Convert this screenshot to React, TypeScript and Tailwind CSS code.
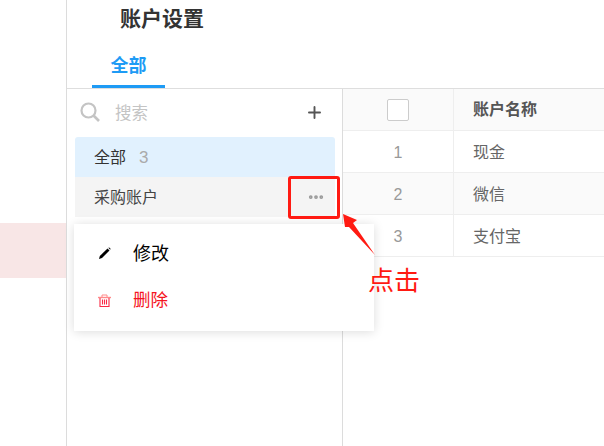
import { Plus, Ellipsis } from 'lucide-react';

const font = { fontFamily: '"Noto Sans CJK SC", "Liberation Sans", sans-serif' };

const rows = [
  { id: 1, name: '现金', stripe: false },
  { id: 2, name: '微信', stripe: true },
  { id: 3, name: '支付宝', stripe: false },
];

export default function App() {
  return (
    <div className="relative flex h-[446px] w-[604px] overflow-hidden bg-white font-['Liberation_Sans','Noto_Sans_CJK_SC',sans-serif]">
      {/* left nav strip */}
      <div className="flex w-[67px] shrink-0 flex-col border-r border-[#dcdcdc] pt-[223px]">
        <div className="h-[55px] bg-[#f8e6e6]"></div>
      </div>

      <div className="flex min-w-0 flex-1 flex-col">
        {/* header */}
        <div className="h-[89px] shrink-0 border-b border-[#dedede]">
          <h1 className="h-[48px] pl-[53px] pt-[5px] text-[21px] leading-[28px] font-bold text-[#333]">账户设置</h1>
          <div className="ml-[25px] h-[40px] w-[73px] border-b-[3px] border-[#1e9bf5] pt-[6px] text-center text-[18px] leading-[25px] font-bold text-[#1e9bf5]">
            全部
          </div>
        </div>

        <div className="flex min-h-0 flex-1">
          {/* account group list */}
          <div className="w-[276px] shrink-0 border-r border-[#dcdcdc] pl-2 pr-[7px]">
            <div className="flex h-[48px] items-center pb-[1px]">
              <svg className="ml-[5px] -mt-[1px]" width="20" height="20" viewBox="0 0 20 20" fill="none" stroke="#c4c4c4">
                <circle cx="8.5" cy="8.5" r="7" strokeWidth="2.2" />
                <path d="M13.5 13.5 19 19" strokeWidth="2.6" />
              </svg>
              <span className="ml-[15px] flex-1 pt-[1px] text-[16.5px] text-[#c4c4c4]">搜索</span>
              <Plus className="mr-[11px] h-[19px] w-[19px] text-[#555]" strokeWidth={2.4} />
            </div>
            <div className="flex h-[40px] items-center rounded-t-[3px] bg-[#e1f1fe] pl-[19px] pt-[2px] text-[16px] text-[#333]">
              全部<span className="ml-[13px] text-[17px] text-[#aaa]">3</span>
            </div>
            <div className="flex h-[40px] items-center justify-between bg-[#f4f4f4] pl-[19px] pr-[10px] pt-[2px] text-[16px] text-[#444]">
              采购账户
              <Ellipsis className="-mt-[2px] h-[18px] w-[18px] text-[#999]" strokeWidth={3} />
            </div>
          </div>

          {/* table */}
          <div className="min-w-0 flex-1 text-[16px] text-[#666]">
            <div className="flex h-[42px] border-b border-[#eee] bg-[#fafafa]">
              <div className="flex w-[111px] shrink-0 items-center justify-center border-r border-[#eee]">
                <span className="h-[22px] w-[22px] rounded-[2px] border border-[#ccc] bg-white"></span>
              </div>
              <div className="flex items-center pl-[19px] pt-[1px] font-bold text-[#555]">账户名称</div>
            </div>
            {rows.map((row) => (
              <div key={row.id} className={`flex h-[42px] border-b border-[#eee] ${row.stripe ? 'bg-[#fafafa]' : 'bg-white'}`}>
                <div className="flex w-[111px] shrink-0 items-center justify-center border-r border-[#eee] pt-[2px] text-[#999]">{row.id}</div>
                <div className="flex items-center pl-[19px] pt-[2px]">{row.name}</div>
              </div>
            ))}
          </div>
        </div>
      </div>

      {/* popup menu */}
      <div className="absolute left-[74px] top-[224px] h-[107px] w-[300px] bg-white pt-[6px] shadow-[0_1px_10px_rgba(0,0,0,0.14)]">
        <div className="flex h-[47px] items-center pl-[24px] text-[18px] text-black">
          <svg width="13" height="13" viewBox="0 0 13 13" fill="#000">
            <polygon points="1,12 1.8,9 9.5,1.5 11.5,3.5 4,11" />
            <polygon points="10.3,0.8 11.2,0.4 12.6,1.8 12.2,2.7" />
          </svg>
          <span className="ml-[22px] pt-[2px]">修改</span>
        </div>
        <div className="flex h-[47px] items-center pl-[24px] text-[#f5141e]">
          <svg width="13" height="13" viewBox="0 0 13 13" fill="none" stroke="#fa2a46">
            <path d="M0 3.5h13" stroke="#ff8a8a" strokeWidth="1.4" />
            <path d="M4 3V1h5v2" stroke="#ff8a8a" />
            <path d="M2 4v8.5h9V4M4.5 5.5v5M6.5 5.5v5M8.5 5.5v5" strokeWidth="1.1" />
          </svg>
          <span className="ml-[22px] text-[17.5px]">删除</span>
        </div>
      </div>

      {/* annotation */}
      <div className="absolute left-[288px] top-[176px] h-[43px] w-[52px] rounded-[3px] border-[3px] border-[#ff1a12]"></div>
      <svg className="absolute left-[340px] top-[210px]" width="38" height="50" viewBox="0 0 38 50">
        <polygon points="3,4 17,10 13,13 35,45 9,17 5,17" fill="#ff1a12" />
      </svg>
      <span className="absolute left-[368px] top-[263px] text-[26px] leading-[32px] text-[#ff1a12]" style={font}>点击</span>
    </div>
  );
}
